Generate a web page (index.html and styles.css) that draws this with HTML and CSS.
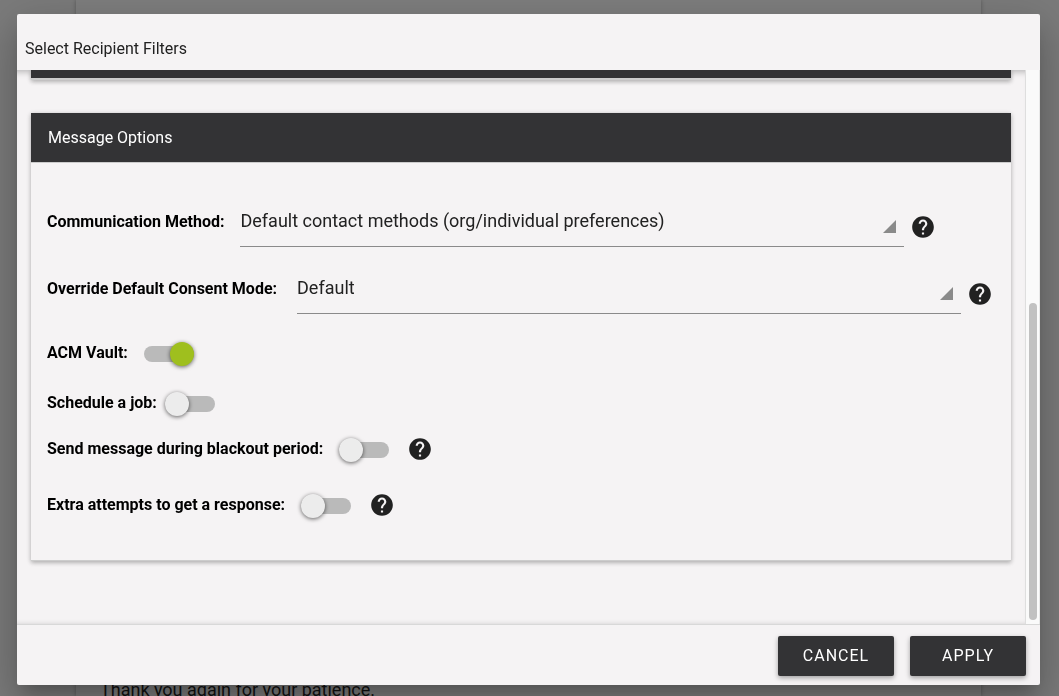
FILE: index.html
```html
<!DOCTYPE html>
<html lang="en">
<head>
  <meta charset="UTF-8" />
  <title>Select Recipient Filters</title>
  <link rel="stylesheet" href="styles.css">
</head>
<body>
  <!-- page behind the dialog -->
  <main class="page">
    <p>Thank you again for your patience.</p>
  </main>

  <svg class="icon-defs" width="0" height="0" aria-hidden="true">
    <symbol id="icon-help" viewBox="0 0 24 24">
      <path d="M12 2C6.480 2 2 6.480 2 12s4.480 10 10 10 10-4.480 10-10S17.520 2 12 2zm1 17h-2v-2h2v2zm2.070-7.750l-.9.920C13.450 12.900 13 13.500 13 15h-2v-.5c0-1.100.45-2.100 1.170-2.830l1.240-1.260c.37-.36.590-.86.590-1.410 0-1.100-.9-2-2-2s-2 .9-2 2H8c0-2.210 1.790-4 4-4s4 1.790 4 4c0 .88-.36 1.680-.93 2.250z"/>
    </symbol>
  </svg>

  <div class="overlay">
    <div class="dialog" role="dialog" aria-labelledby="dialogTitle">
      <header class="dialog-header">
        <h1 id="dialogTitle">Select Recipient Filters</h1>
      </header>

      <div class="dialog-body">
        <div class="content">
          <section class="card card-collapsed"></section>

          <section class="card">
            <h2>Message Options</h2>
            <form class="options" id="optionsForm">
              <div class="row row-select">
                <label for="method">Communication Method:</label>
                <select id="method">
                  <option>Default contact methods (org/individual preferences)</option>
                </select>
                <svg class="help"><use href="#icon-help"/></svg>
              </div>
              <div class="row row-select">
                <label class="wide" for="consent">Override Default Consent Mode:</label>
                <select id="consent">
                  <option>Default</option>
                </select>
                <svg class="help"><use href="#icon-help"/></svg>
              </div>
              <div class="row row-vault">
                <label for="vault">ACM Vault:</label>
                <input type="checkbox" class="toggle" id="vault" checked />
              </div>
              <div class="row row-schedule">
                <label for="schedule">Schedule a job:</label>
                <input type="checkbox" class="toggle" id="schedule" />
              </div>
              <div class="row row-blackout">
                <label for="blackout">Send message during blackout period:</label>
                <input type="checkbox" class="toggle" id="blackout" />
                <svg class="help"><use href="#icon-help"/></svg>
              </div>
              <div class="row row-extra">
                <label for="extra">Extra attempts to get a response:</label>
                <input type="checkbox" class="toggle" id="extra" />
                <svg class="help"><use href="#icon-help"/></svg>
              </div>
            </form>
          </section>
        </div>
        <div class="scrollbar"><div class="scrollbar-thumb"></div></div>
      </div>

      <footer class="dialog-footer">
        <button type="button">CANCEL</button>
        <button type="submit" form="optionsForm">APPLY</button>
      </footer>
    </div>
  </div>
</body>
</html>
```

FILE: styles.css
```css
* {
  box-sizing: border-box;
}
body {
  margin: 0;
  height: 100vh;
  overflow: hidden;
  font-family: Roboto, sans-serif;
  font-size: 16px;
  line-height: 20px;
  color: #212121;
  background: #7b7b7b;
}
h1, h2, p {
  margin: 0;
  font-size: 16px;
  font-weight: 400;
}
.icon-defs {
  position: absolute;
}
.page {
  display: flex;
  align-items: flex-end;
  height: 100%;
  margin: 0 78px 0 76px;
  padding: 0 24px;
  background: #7e7e7e;
  box-shadow: 0 0 4px rgba(0,0,0,0.3);
}
.page p {
  margin-bottom: -4px;
  font-size: 18px;
  color: #111;
}
.overlay {
  position: fixed;
  inset: 0;
  display: flex;
  padding: 14px 19px 11px 17px;
}
.dialog {
  flex: 1;
  display: flex;
  flex-direction: column;
  min-width: 0;
  border-radius: 2px;
  background: #f5f3f4;
  box-shadow: 0 11px 15px -7px rgba(0,0,0,0.2), 0 24px 38px 3px rgba(0,0,0,0.14), 0 9px 46px 8px rgba(0,0,0,0.12);
}
.dialog-header {
  height: 56px;
  padding: 25px 8px 0;
}
.dialog-body {
  flex: 1;
  display: flex;
  min-height: 0;
}
.content {
  flex: 1;
  min-width: 0;
  padding: 0 14px;
  overflow: hidden;
  box-shadow: inset 0 7px 6px -5px rgba(0,0,0,0.25), inset 0 -5px 5px -5px rgba(0,0,0,0.15);
}
.card {
  margin-bottom: 33px;
  background: #f5f3f4;
  border-bottom: 1px solid #ccc;
  box-shadow: 0 1px 5px rgba(0,0,0,0.2), 0 2px 4px rgba(0,0,0,0.14);
}
.card-collapsed {
  height: 10px;
  background: #333335;
  border-bottom: 2px solid #ccc;
}
.card h2 {
  height: 50px;
  padding: 15px 17px 0;
  color: #fff;
  background: #333335;
  border-bottom: 1px solid #ccc;
}

/* option rows */
.options {
  padding: 34px 16px 17px;
}
.row {
  display: flex;
  align-items: center;
}
.row label {
  margin-right: 16px;
  font-weight: 700;
  color: #000;
  white-space: nowrap;
}
.row label.wide {
  margin-right: 20px;
}
.row-select {
  height: 50px;
  margin-bottom: 17px;
}
.row-vault {
  height: 44px;
}
.row-schedule {
  height: 56px;
}
.row-schedule label {
  margin-right: 8px;
}
.row-blackout {
  height: 36px;
}
.row-extra {
  height: 76px;
}
select {
  flex: 0 1 70%;
  height: 50px;
  min-width: 0;
  padding: 0 30px 2px 0;
  font: 18px/24px Roboto, sans-serif;
  color: #212121;
  appearance: none;
  border: none;
  border-bottom: 1px solid #8a8a8a;
  border-radius: 0;
  background: linear-gradient(to bottom right, transparent 48%, #8a8a8a 52%) right 8px top 23px / 13px 13px no-repeat;
}
.help {
  flex: none;
  width: 26px;
  height: 26px;
  margin-left: 18px;
  fill: #212121;
}
.row-select .help {
  margin: 10px 0 0 6px;
}
.toggle {
  display: flex;
  align-items: center;
  width: 50px;
  height: 16px;
  margin: 2px 0 0;
  appearance: none;
  border-radius: 8px;
  background: #bababa;
  cursor: pointer;
}
.toggle::before {
  content: "";
  flex: none;
  width: 24px;
  height: 24px;
  border-radius: 50%;
  background: #ececec;
  box-shadow: 0 1px 4px rgba(0,0,0,0.6);
}
.toggle:checked::before {
  margin-left: 26px;
  background: #9fbf1e;
}

.scrollbar {
  display: flex;
  flex-direction: column;
  justify-content: flex-end;
  width: 15px;
  padding: 4px 2px 4px 3px;
  background: #fafafa;
  border-left: 1px solid #dedede;
  border-right: 1px solid #e8e8e8;
}
.scrollbar-thumb {
  width: 8px;
  height: 58%;
  border-radius: 4px;
  background: #c1c1c1;
}
.dialog-footer {
  display: flex;
  justify-content: flex-end;
  gap: 16px;
  padding: 11px 14px 9px;
  border-top: 1px solid #d8d8d8;
}
.dialog-footer button {
  width: 116px;
  height: 40px;
  font: 16px/20px Roboto, sans-serif;
  letter-spacing: 1px;
  color: #fff;
  background: #333335;
  border: none;
  border-radius: 2px;
  box-shadow: 0 2px 5px rgba(0,0,0,0.35);
  cursor: pointer;
}
```
